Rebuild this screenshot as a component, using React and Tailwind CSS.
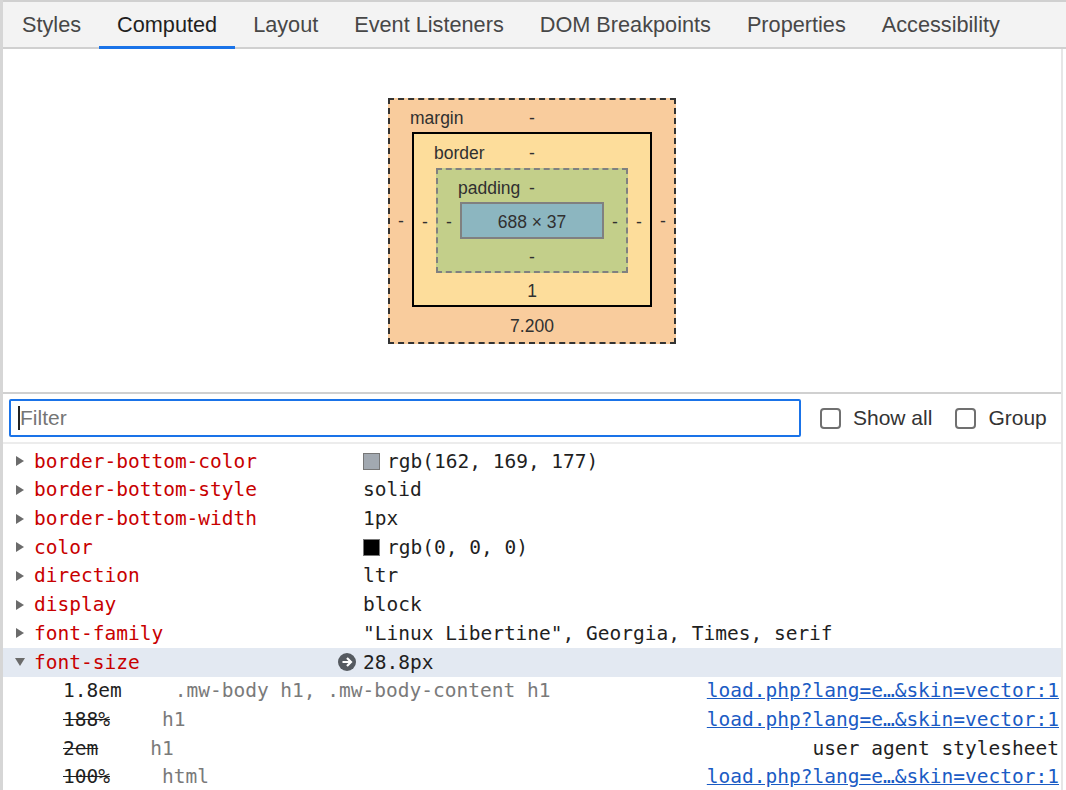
const tabs = ["Styles", "Computed", "Layout", "Event Listeners", "DOM Breakpoints", "Properties", "Accessibility"];

const props = [
  { name: "border-bottom-color", value: "rgb(162, 169, 177)", swatch: "bg-[#a2a9b1]" },
  { name: "border-bottom-style", value: "solid" },
  { name: "border-bottom-width", value: "1px" },
  { name: "color", value: "rgb(0, 0, 0)", swatch: "bg-black" },
  { name: "direction", value: "ltr" },
  { name: "display", value: "block" },
  { name: "font-family", value: "\"Linux Libertine\", Georgia, Times, serif" },
];

const cascade = [
  { value: "1.8em", selector: ".mw-body h1, .mw-body-content h1", source: "load.php?lang=e…&skin=vector:1", gap: "ml-[53px]" },
  { value: "188%", struck: true, selector: "h1", source: "load.php?lang=e…&skin=vector:1", gap: "ml-[52px]" },
  { value: "2em", struck: true, selector: "h1", source: "user agent stylesheet", gap: "ml-[52px]", plain: true },
  { value: "100%", struck: true, selector: "html", source: "load.php?lang=e…&skin=vector:1", gap: "ml-[52px]" },
];

function Triangle({ open }) {
  return open ? (
    <svg width="12" height="10" viewBox="0 0 12 10"><path d="M1 1h10L6 9z" fill="#6b6b6b" /></svg>
  ) : (
    <svg width="10" height="12" viewBox="0 0 10 12"><path d="M1 1v10l8-5z" fill="#6b6b6b" /></svg>
  );
}

function Side({ children }) {
  return <span className="w-[22px] shrink-0 text-center pt-[4px]">{children}</span>;
}

// one layer of the box model diagram
function Layer({ label, top, bottom, topH, botH, className, children }) {
  return (
    <div className={`flex flex-col ${className}`}>
      <div className={`relative flex items-center justify-center pt-[4px] ${topH}`}>
        {label && <span className="absolute left-[20px]">{label}</span>}
        <span>{top}</span>
      </div>
      <div className="flex items-center">
        <Side>-</Side>
        {children}
        <Side>-</Side>
      </div>
      <div className={`flex items-center justify-center pt-[4px] ${botH}`}>{bottom}</div>
    </div>
  );
}

function Checkbox({ label }) {
  return (
    <label className="flex items-center">
      <span className="w-[21px] h-[21px] rounded-[4px] border-2 border-[#707070] bg-white" />
      <span className="ml-[12px] text-[21px] text-[#333]">{label}</span>
    </label>
  );
}

export default function App() {
  return (
    <div className="w-[1066px] h-[790px] overflow-hidden bg-white border-l-[3px] border-[#d6d6d6] font-['Liberation_Sans',Arial,sans-serif]">
      {/* tab strip */}
      <div className="flex h-[49px] bg-[#f3f3f3] border-t-2 border-b-2 border-[#d0d0d0] pl-[1px]">
        {tabs.map((t) => (
          <div
            key={t}
            className={`flex items-center px-[18px] pt-[2px] text-[21.7px] border-b-[3px] -mb-[2px] ${
              t === "Computed" ? "border-[#1a73e8] text-[#1f1f1f]" : "border-transparent text-[#474747]"
            }`}
          >
            {t}
          </div>
        ))}
      </div>

      <div className="w-[1060px] border-r-2 border-[#e6e6e6] h-full">
        {/* box model */}
        <div className="flex justify-center pt-[49px] pb-[48px] border-b-2 border-[#d0d0d0] text-[17.5px] text-[#303030]">
          <Layer
            label="margin"
            top="-"
            bottom="7.200"
            topH="h-[32px]"
            botH="h-[35px]"
            className="w-[288px] border-2 border-dashed border-[#333] bg-[#f9cc9d]"
          >
            <Layer
              label="border"
              top="-"
              bottom="1"
              topH="h-[34px]"
              botH="h-[32px]"
              className="w-[240px] border-2 border-black bg-[#fddd9b]"
            >
              <Layer
                label="padding"
                top="-"
                bottom="-"
                topH="h-[32px]"
                botH="h-[32px]"
                className="w-[192px] border-2 border-dashed border-[#808080] bg-[#c3cf8a]"
              >
                <div className="w-[144px] h-[37px] pt-[4px] border-2 border-[#808080] bg-[#8cb6c0] flex items-center justify-center">
                  688 × 37
                </div>
              </Layer>
            </Layer>
          </Layer>
        </div>

        {/* filter toolbar */}
        <div className="flex items-center h-[50px] pl-[6px] border-b-2 border-[#ececec]">
          <div className="flex items-center w-[792px] h-[38px] border-2 border-[#1a73e8] rounded-[2px] pl-[7px]">
            <span className="w-[2px] h-[24px] bg-[#222]" />
            <span className="text-[21px] text-[#757575]">Filter</span>
          </div>
          <div className="ml-[19px]">
            <Checkbox label="Show all" />
          </div>
          <div className="ml-[23px]">
            <Checkbox label="Group" />
          </div>
        </div>

        {/* computed properties */}
        <div className="pt-[3px] font-['DejaVu_Sans_Mono',monospace] text-[19.5px]">
          {props.map((p) => (
            <div key={p.name} className="flex items-center h-[28.7px]">
              <span className="w-[31px] pl-[12px] flex items-center">
                <Triangle />
              </span>
              <span className="w-[329px] text-[#c80000]">{p.name}</span>
              <span className="flex items-center text-[#1f1f1f]">
                {p.swatch && <span className={`w-[17px] h-[17px] mr-[7px] border border-[#777] ${p.swatch}`} />}
                {p.value}
              </span>
            </div>
          ))}

          <div className="flex items-center h-[28.7px] bg-[#e3e9f2]">
            <span className="w-[31px] pl-[11px] flex items-center">
              <Triangle open />
            </span>
            <span className="w-[304px] text-[#c80000]">font-size</span>
            <svg width="18" height="18" viewBox="0 0 18 18" className="mr-[7px]">
              <circle cx="9" cy="9" r="9" fill="#555a60" />
              <path d="M4.5 9h8M9 5l4 4-4 4" stroke="#fff" strokeWidth="2.2" fill="none" />
            </svg>
            <span className="text-[#1f1f1f]">28.8px</span>
          </div>

          {cascade.map((c, i) => (
            <div key={i} className="flex items-center justify-between h-[28.7px] pl-[60px] pr-[2px]">
              <span className="flex">
                <span className={c.struck ? "line-through text-[#1f1f1f]" : "text-[#1f1f1f]"}>{c.value}</span>
                <span className={`${c.gap} text-[#7a7a7a]`}>{c.selector}</span>
              </span>
              <span className={c.plain ? "text-[#1f1f1f]" : "text-[#1a5bc4] underline"}>{c.source}</span>
            </div>
          ))}
        </div>
      </div>
    </div>
  );
}
